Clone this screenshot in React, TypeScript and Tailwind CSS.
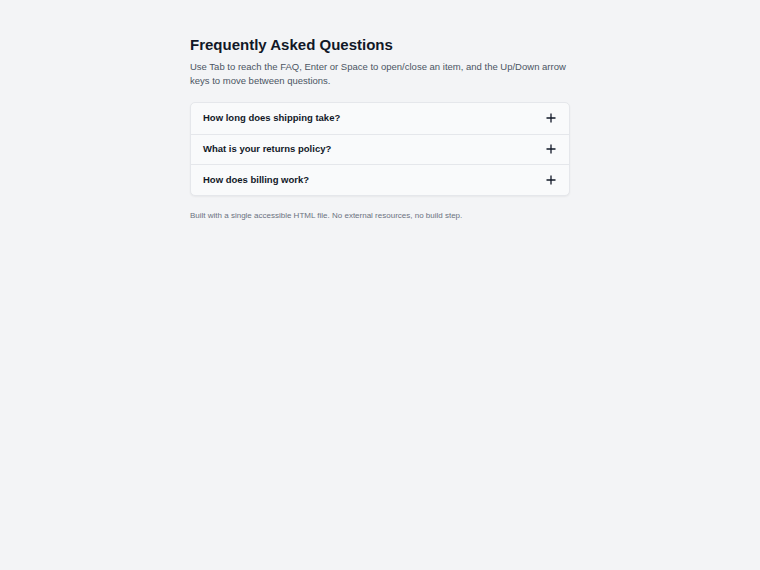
import React from "react";

const questions = [
  "How long does shipping take?",
  "What is your returns policy?",
  "How does billing work?",
];

function PlusIcon() {
  return (
    <svg width="10" height="10" viewBox="0 0 10 10" aria-hidden="true">
      <path d="M5 0.5v9M0.5 5h9" stroke="#111827" strokeWidth="1.3" fill="none" />
    </svg>
  );
}

export default function App() {
  return (
    <div
      className="min-h-[570px] w-full bg-[#f3f4f6] text-[#111827]"
      style={{ fontFamily: '"Liberation Sans", Arial, sans-serif' }}
    >
      <main className="mx-auto w-[380px] pt-[36px]">
        <h1 className="text-[15px] font-bold leading-[18px] text-[#111827]">
          Frequently Asked Questions
        </h1>
        <p className="mt-[6px] text-[9.5px] leading-[14px] text-[#4b5563]">
          Use Tab to reach the FAQ, Enter or Space to open/close an item, and the Up/Down arrow keys to move between
          questions.
        </p>
        <div className="mt-[14px] overflow-hidden rounded-[5px] border border-[#e5e7eb] bg-[#f9fafb] shadow-[0_1px_2px_rgba(0,0,0,0.05)]">
          {questions.map((q, i) => (
            <button
              key={q}
              type="button"
              aria-expanded="false"
              className={`flex h-[30.5px] w-full items-center justify-between pl-[12px] pr-[13px] text-left ${
                i > 0 ? "border-t border-[#e5e7eb]" : ""
              }`}
            >
              <span className="text-[9.5px] font-bold text-[#111827]">{q}</span>
              <PlusIcon />
            </button>
          ))}
        </div>
        <p className="mt-[14px] text-[8px] leading-[12px] text-[#6b7280]">
          Built with a single accessible HTML file. No external resources, no build step.
        </p>
      </main>
    </div>
  );
}
